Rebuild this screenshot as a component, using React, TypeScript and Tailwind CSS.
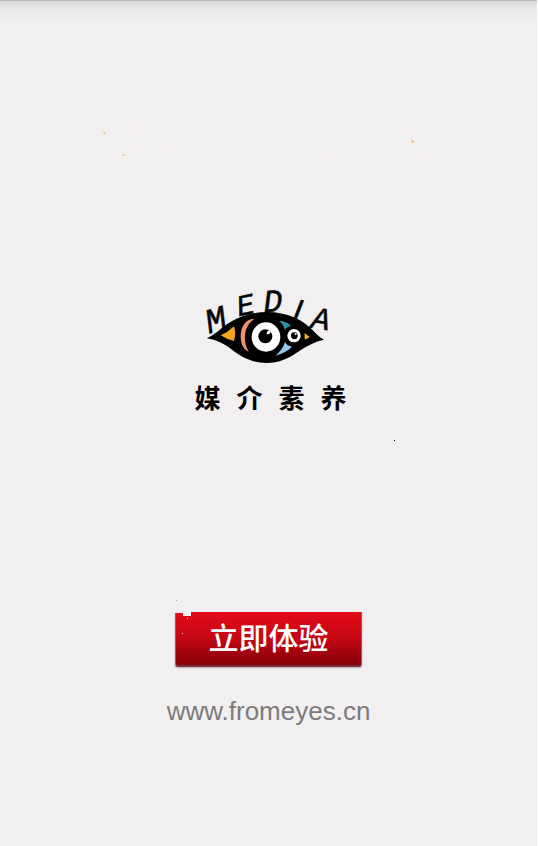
function MediaLogo() {
  return (
    <svg
      className="h-[100px] w-[157px] shrink-0"
      viewBox="0 0 471 300"
      role="img"
      aria-label="MEDIA"
    >
      <g
        fill="#050505"
        stroke="#050505"
        strokeWidth="1.5"
        fontFamily="'Liberation Mono', monospace"
        fontStyle="italic"
      >
        <text x="58" y="176" fontSize="104" transform="rotate(-18 58 176)">M</text>
        <text x="146" y="124" fontSize="88" transform="rotate(-12 146 124)">E</text>
        <text x="222" y="112" fontSize="96" transform="rotate(-4 222 112)">D</text>
        <text x="306" y="134" fontSize="92" fontFamily="'Liberation Sans', sans-serif" transform="rotate(10 306 134)">I</text>
        <text x="361" y="158" fontSize="94" transform="rotate(8 361 158)">A</text>
      </g>
      <path
        d="M50 190 C70 181 79 173 91 163 C128 133 174 111 231 111 C293 111 337 135 367 164 C379 176 389 187 402 194 C374 200 352 212 328 228 C298 250 266 264 229 264 C187 263 155 247 127 225 C101 205 80 195 50 190Z"
        fill="#000"
      />
      <path d="M92 181 Q113 172 132 154 Q139 176 132 198 Q111 194 92 181Z" fill="#f2a51d" />
      <path d="M193 132 C171 130 151 152 152 187 C153 210 162 225 176 230 C167 215 163 198 165 180 C167 158 177 143 193 132Z" fill="#f28f70" />
      <ellipse cx="228" cy="186" rx="43" ry="44" fill="#fff" />
      <circle cx="226" cy="184" r="21" fill="#000" />
      <path d="M229 177 L233 168 Q239 164 242 171 Q239 180 229 177Z" fill="#fff" />
      <path d="M268 138 Q288 138 303 152 Q291 154 285 164 Q280 148 268 138Z" fill="#2794ac" />
      <path d="M285 201 Q291 213 306 215 Q287 234 256 242 Q278 225 285 201Z" fill="#8dcaf0" />
      <circle cx="312" cy="182" r="20" fill="#fff" />
      <circle cx="313" cy="182" r="10" fill="#000" />
      <circle cx="317" cy="177" r="3" fill="#fff" />
      <path d="M344 173 Q352 182 359 185 Q354 191 344 193Z" fill="#f4b31c" />
    </svg>
  );
}

function Specks() {
  return (
    <svg
      className="pointer-events-none absolute left-0 top-0 h-[846px] w-[538px]"
      viewBox="0 0 538 846"
      aria-hidden="true"
    >
      <g fill="#f9bd80">
        <path d="M103 132h2v1h1v1h-2zM122 154h2v1h1v1h-2zM411 139h1v1h1v1h1v2h-2z" />
      </g>
      <g fill="#faeadf">
        <path d="M131 121h2v1h-2zM163 147h2v1h-2zM142 129h1v1h-1zM129 145h3v1h-3zM405 130h3v1h-3zM422 152h2v1h-2zM326 152h2v1h-2z" />
      </g>
      <rect x="394" y="440" width="1" height="1" fill="#000" />
      <rect x="176" y="600" width="1" height="1" fill="#aaa" />
    </svg>
  );
}

export default function App() {
  return (
    <div className="min-h-screen bg-white pr-px">
      <main className="relative flex min-h-screen flex-col items-center bg-[#f1eff0] pt-[275px]">
        <div className="absolute inset-x-0 top-0 h-5 border-t border-[#b7b5b6] bg-linear-to-b from-[#dddbdc] via-[#eae8e9] to-[#f1eff0]" />
        <MediaLogo />
        <h1
          className="flex gap-4 pl-1 text-[26px] leading-[44px] font-bold text-black"
          style={{ fontFamily: "'Noto Sans CJK SC', sans-serif" }}
          aria-label="媒介素养"
        >
          <span>媒</span>
          <span>介</span>
          <span>素</span>
          <span>养</span>
        </h1>
        <button
          type="button"
          className="relative mt-[193px] h-[55px] w-[187px] rounded-b-[3px] border-x border-b-2 border-x-[#c84a50] border-b-[#78323a] bg-linear-to-b from-[#e20a18] via-[#c50714] to-[#850009] text-center font-['Liberation_Sans','Noto_Sans_CJK_SC',sans-serif] text-[30px] leading-[46px] font-medium text-white shadow-[0_1px_2px_#aaa]"
        >
          立即体验
          <span className="absolute -left-px top-0 h-px w-2 bg-[#f1eff0]" />
          <span className="absolute left-[7px] top-0 h-1 w-2 bg-[#f1eff0]" />
          <span className="absolute left-[11px] top-1.5 size-px bg-[#f1dada]" />
          <span className="absolute left-1.5 top-[21px] size-px bg-[#f1dada]" />
        </button>
        <a
          href="#www.fromeyes.cn"
          className="mt-7 font-['Liberation_Sans',Arial,sans-serif] text-[26px] leading-8 text-[#7d7b7c]"
        >
          www.fromeyes.cn
        </a>
        <Specks />
      </main>
    </div>
  );
}
